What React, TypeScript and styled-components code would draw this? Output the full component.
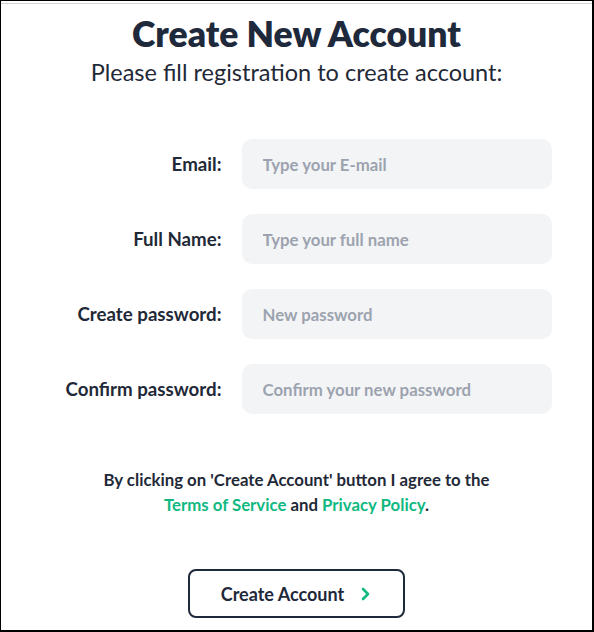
import React from "react";
import styled, { createGlobalStyle } from "styled-components";

const Global = createGlobalStyle`
  html, body { margin: 0; padding: 0; background: #fff; }
  body { font-family: Lato, "Noto Sans", sans-serif; }
  * { box-sizing: border-box; }
`;

const Frame = styled.div`
  width: 594px;
  height: 632px;
  border-style: solid;
  border-color: #000;
  border-width: 1px 2px 2px 1px;
  overflow: hidden;
`;

const Inner = styled.div`
  margin-top: 2px;
  border-top: 1px solid #d4d4d4;
  display: flex;
  flex-direction: column;
  align-items: center;
`;

const Title = styled.h1`
  margin: 10px 0 0;
  font-size: 35.5px;
  line-height: 40px;
  font-weight: 800;
  color: #1e293b;
`;

const Subtitle = styled.p`
  margin: 2px 0 0;
  font-size: 23.5px;
  line-height: 32px;
  font-weight: 400;
  color: #1f2937;
`;

const Form = styled.div`
  margin-top: 51px;
  display: grid;
  grid-template-columns: 180px 310px;
  column-gap: 20px;
  row-gap: 25px;
  align-items: center;
`;

const Label = styled.label`
  text-align: right;
  font-size: 18.7px;
  font-weight: 700;
  color: #1f2937;
`;

const Input = styled.input`
  height: 50px;
  width: 310px;
  border: none;
  border-radius: 10px;
  background: #f3f4f6;
  padding: 0 21px;
  font-family: inherit;
  font-size: 16.8px;
  font-weight: 700;
  color: #1f2937;
  outline: none;
  &::placeholder { color: #9ca3af; }
`;

const Agree = styled.p`
  margin: 53px 0 0;
  text-align: center;
  font-size: 16.8px;
  line-height: 25px;
  font-weight: 700;
  color: #1f2937;
`;

const Link = styled.a`
  color: #10b981;
  text-decoration: none;
`;

const Button = styled.button`
  margin-top: 52px;
  width: 217px;
  height: 49px;
  border: 2px solid #1e293b;
  border-radius: 8px;
  background: #fff;
  display: flex;
  align-items: center;
  justify-content: center;
  gap: 16px;
  font-family: inherit;
  font-size: 18px;
  font-weight: 700;
  color: #1e293b;
`;

const fields = [
  { label: "Email:", ph: "Type your E-mail", type: "email" },
  { label: "Full Name:", ph: "Type your full name", type: "text" },
  { label: "Create password:", ph: "New password", type: "password" },
  { label: "Confirm password:", ph: "Confirm your new password", type: "password" },
];

export default function App() {
  return (
    <Frame>
      <Global />
      <Inner>
        <Title>Create New Account</Title>
        <Subtitle>Please fill registration to create account:</Subtitle>
        <Form>
          {fields.map((f) => (
            <React.Fragment key={f.label}>
              <Label>{f.label}</Label>
              <Input type={f.type} placeholder={f.ph} />
            </React.Fragment>
          ))}
        </Form>
        <Agree>
          By clicking on 'Create Account' button I agree to the
          <br />
          <Link href="#">Terms of Service</Link> and <Link href="#">Privacy Policy</Link>.
        </Agree>
        <Button>
          Create Account
          <svg width="12" height="14" viewBox="0 0 12 14" fill="none">
            <path d="M3 2l5 5-5 5" stroke="#10b981" strokeWidth="2.6" strokeLinecap="round" strokeLinejoin="round" />
          </svg>
        </Button>
      </Inner>
    </Frame>
  );
}
